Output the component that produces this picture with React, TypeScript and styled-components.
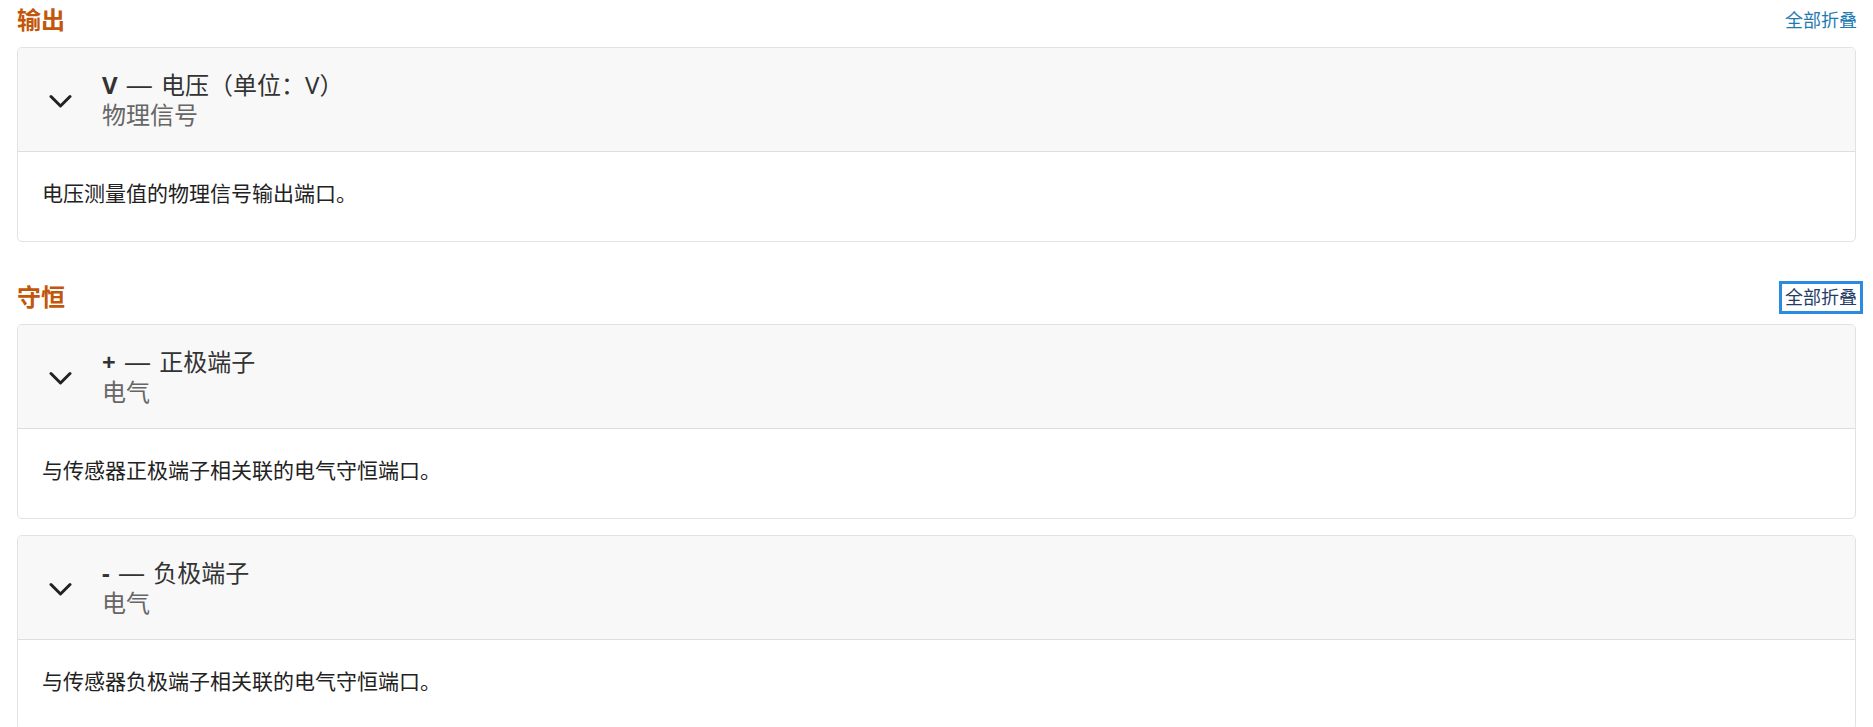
import styled, { createGlobalStyle } from "styled-components";

const GlobalStyle = createGlobalStyle`
  body {
    margin: 0;
    background: #ffffff;
    font-family: "Noto Sans", "Noto Sans CJK SC", sans-serif;
    color: #333333;
  }
`;

interface Port {
  name: string;
  label: string;
  domain: string;
  description: string;
}

interface Section {
  title: string;
  focused?: boolean;
  ports: Port[];
}

const sections: Section[] = [
  {
    title: "输出",
    ports: [
      {
        name: "V",
        label: "电压（单位：V）",
        domain: "物理信号",
        description: "电压测量值的物理信号输出端口。",
      },
    ],
  },
  {
    title: "守恒",
    focused: true,
    ports: [
      {
        name: "+",
        label: "正极端子",
        domain: "电气",
        description: "与传感器正极端子相关联的电气守恒端口。",
      },
      {
        name: "-",
        label: "负极端子",
        domain: "电气",
        description: "与传感器负极端子相关联的电气守恒端口。",
      },
    ],
  },
];

const Page = styled.div`
  padding: 0 17px;
  display: flex;
  flex-direction: column;
  gap: 35px;
`;

const SectionWrap = styled.section`
  display: flex;
  flex-direction: column;
`;

const SectionHeader = styled.div`
  height: 40px;
  display: flex;
  align-items: center;
  justify-content: space-between;
  margin-bottom: 7px;
`;

const SectionTitle = styled.h2`
  margin: 0;
  font-size: 24px;
  font-weight: 700;
  line-height: 40px;
  color: #c2570b;
`;

const CollapseAll = styled.button<{ $focused?: boolean }>`
  border: none;
  background: none;
  padding: 0;
  margin-right: -1px;
  font-family: inherit;
  font-size: 18px;
  line-height: 21px;
  cursor: pointer;
  color: ${(p) => (p.$focused ? "#1f3d68" : "#1f7ab0")};
  outline: ${(p) => (p.$focused ? "3px solid #2a8be0" : "none")};
  outline-offset: 3px;
`;

const CardList = styled.div`
  display: flex;
  flex-direction: column;
  gap: 16px;
`;

const Card = styled.div`
  border: 1px solid #e2e2e2;
  border-radius: 5px;
  overflow: hidden;
  background: #ffffff;
`;

const CardHeader = styled.div`
  display: flex;
  align-items: center;
  background: #f8f8f8;
  border-bottom: 1px solid #dedede;
  padding: 22px 20px 21px 0;
`;

const ChevronBox = styled.div`
  width: 84px;
  display: flex;
  justify-content: center;
  padding-left: 2px;
  box-sizing: border-box;
  margin-top: 4px;
`;

const TitleBlock = styled.div`
  display: flex;
  flex-direction: column;
  font-size: 24px;
  line-height: 30px;
`;

const PortTitle = styled.div`
  color: #333333;
  height: 30px;
`;

const PortName = styled.span`
  font-weight: 700;
`;

const Dash = styled.span`
  font-family: "Liberation Sans", sans-serif;
  font-size: 25px;
  line-height: 1;
  margin: 0 3px;
`;

const PortDomain = styled.div`
  color: #666666;
`;

const CardBody = styled.div`
  padding: 28px 24px 35px;
  font-size: 21px;
  line-height: 26px;
  color: #222222;
`;

const Chevron = () => (
  <svg width="24" height="16" viewBox="0 0 24 16" fill="none">
    <polyline
      points="2,2.5 11.5,12 21,2.5"
      stroke="#222222"
      strokeWidth="3"
      strokeLinecap="round"
      strokeLinejoin="round"
    />
  </svg>
);

const PortCard = ({ port }: { port: Port }) => (
  <Card>
    <CardHeader>
      <ChevronBox>
        <Chevron />
      </ChevronBox>
      <TitleBlock>
        <PortTitle>
          <PortName>{port.name}</PortName> <Dash>—</Dash> {port.label}
        </PortTitle>
        <PortDomain>{port.domain}</PortDomain>
      </TitleBlock>
    </CardHeader>
    <CardBody>{port.description}</CardBody>
  </Card>
);

export default function App() {
  return (
    <>
      <GlobalStyle />
      <Page>
        {sections.map((s) => (
          <SectionWrap key={s.title}>
            <SectionHeader>
              <SectionTitle>{s.title}</SectionTitle>
              <CollapseAll $focused={s.focused}>全部折叠</CollapseAll>
            </SectionHeader>
            <CardList>
              {s.ports.map((p) => (
                <PortCard key={p.name} port={p} />
              ))}
            </CardList>
          </SectionWrap>
        ))}
      </Page>
    </>
  );
}
